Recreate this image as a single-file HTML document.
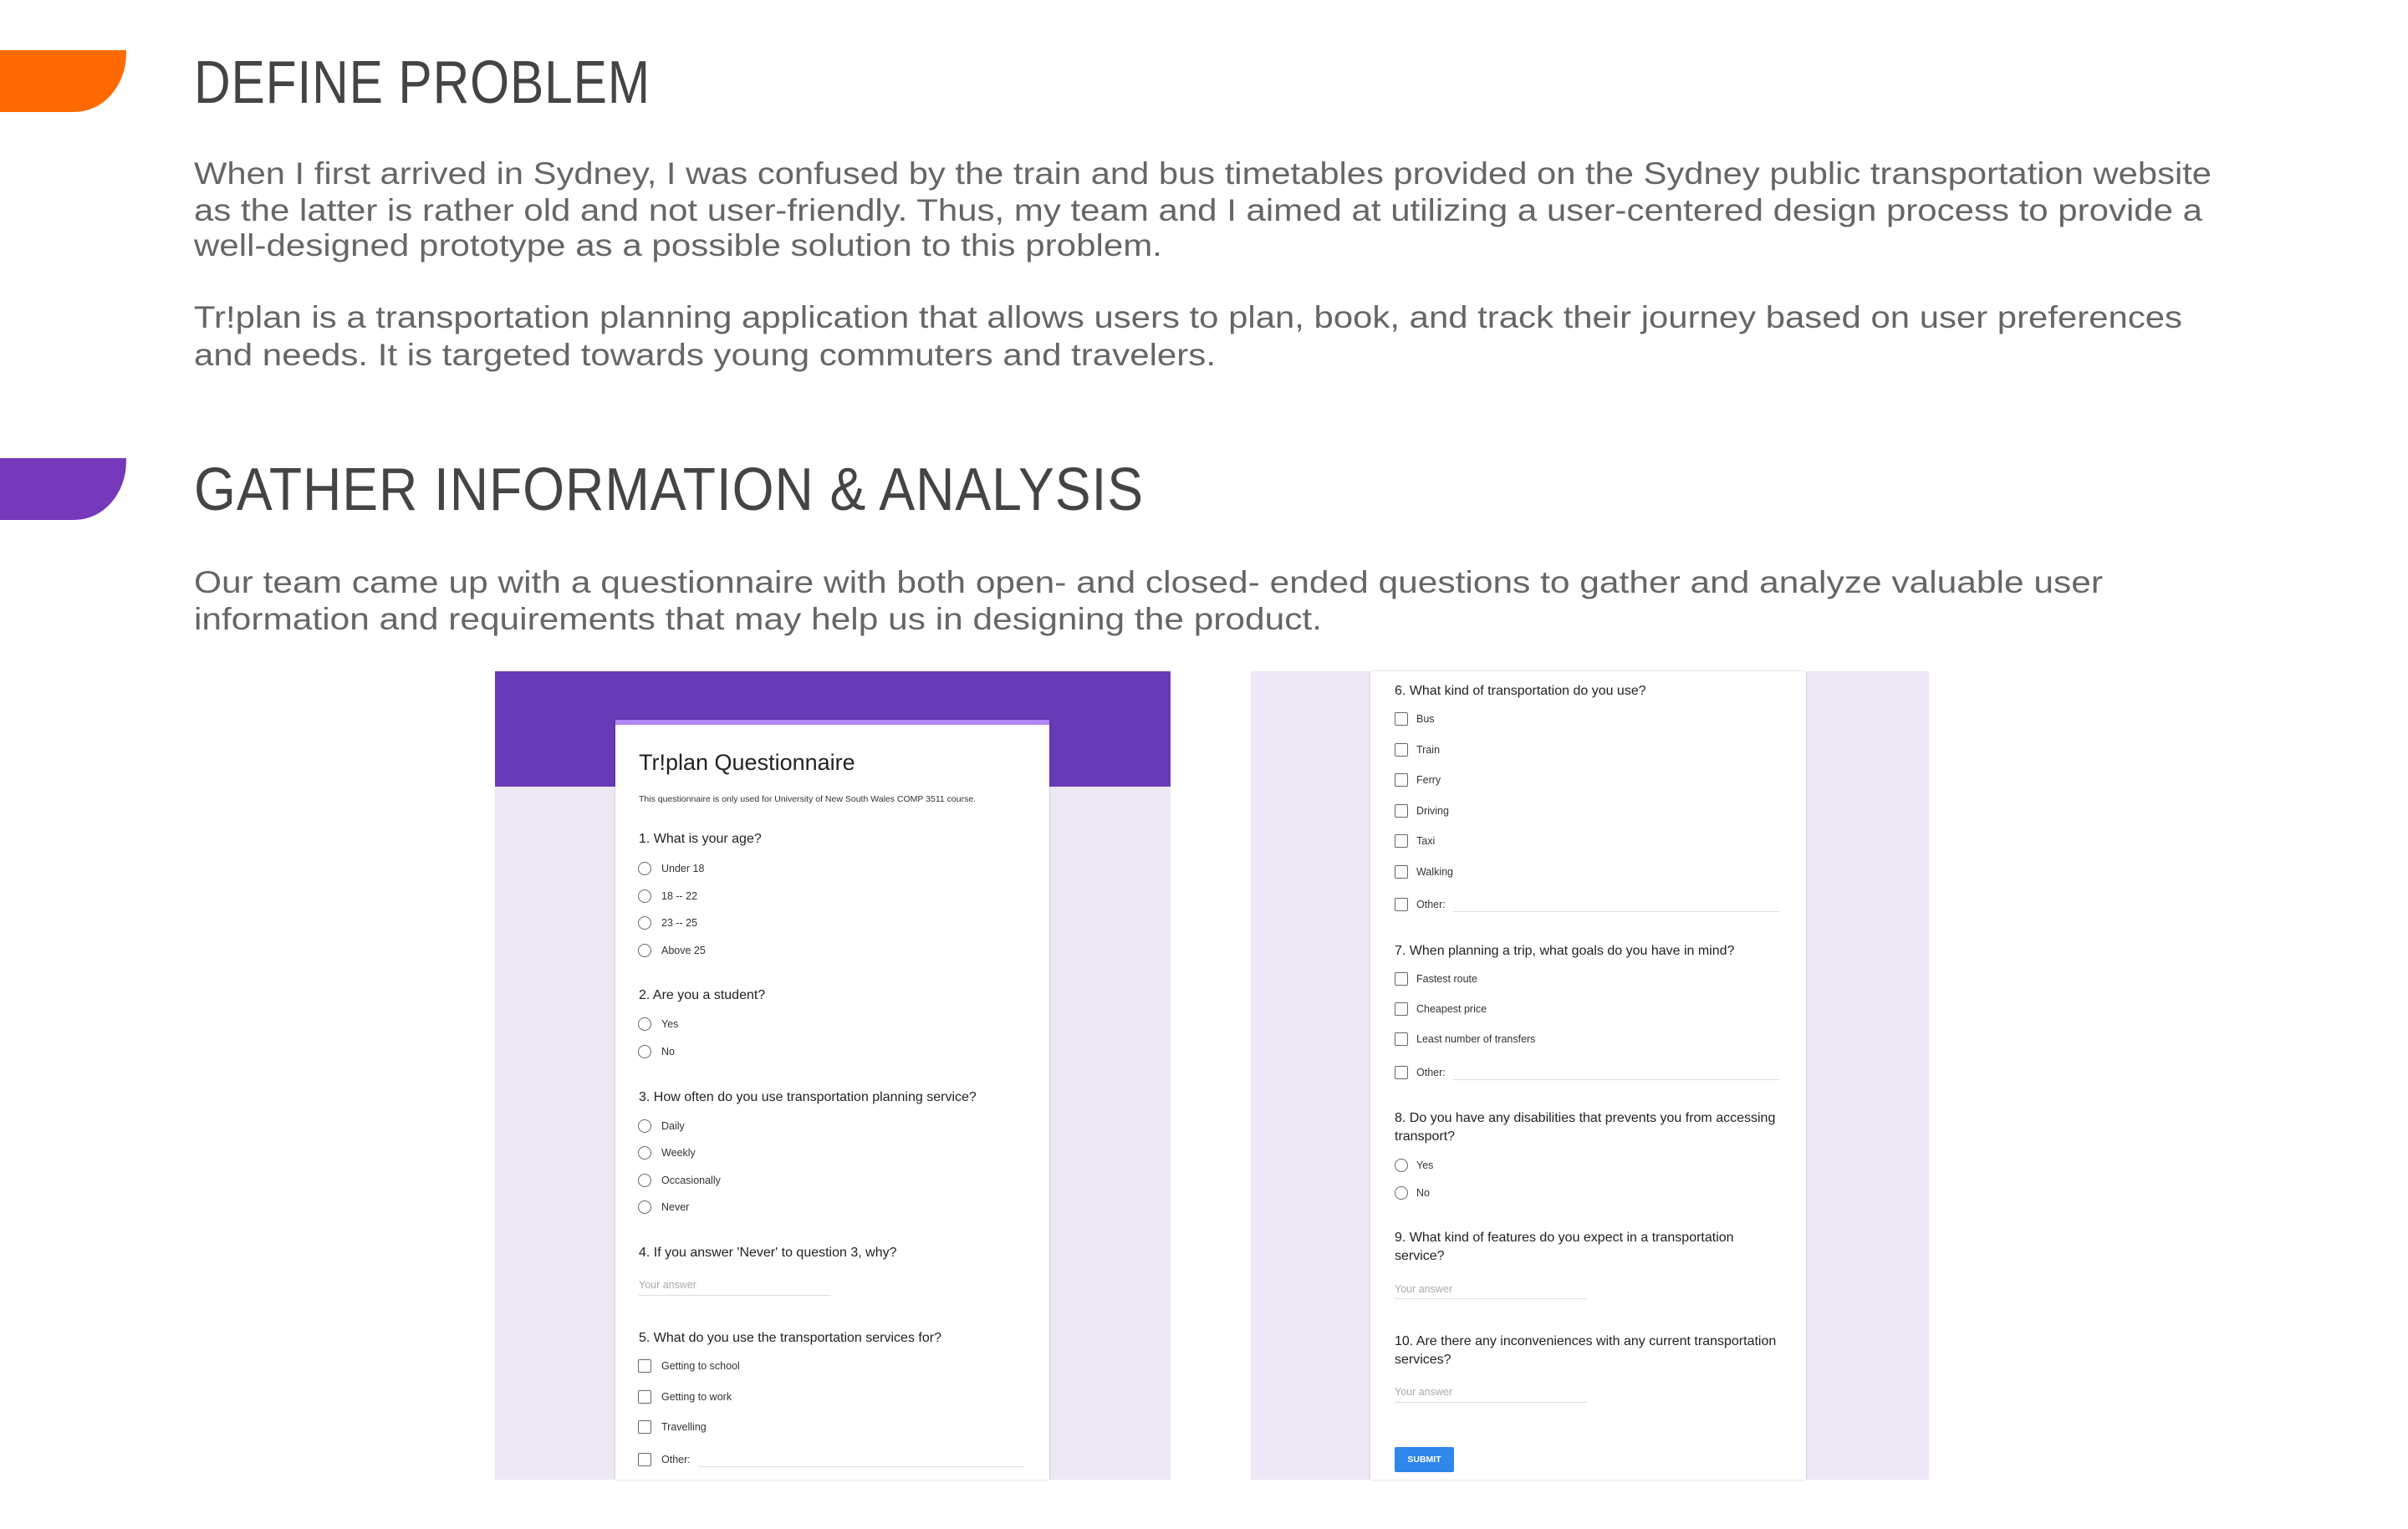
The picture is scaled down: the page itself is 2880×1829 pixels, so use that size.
<!DOCTYPE html>
<html><head><meta charset="utf-8"><style>
*{margin:0;padding:0;box-sizing:border-box}
body{width:2880px;height:1829px;background:#fff;position:relative;overflow:hidden;font-family:"Liberation Sans",Arial,sans-serif}
.a{position:absolute;white-space:nowrap}
.bar{position:absolute;left:0;width:151px;height:74px;border-bottom-right-radius:62px 70px}
.h{font-size:72px;color:#444;line-height:72px;transform-origin:0 0;letter-spacing:1px}
.p{font-size:37px;color:#666;line-height:44px;transform-origin:0 0}
.panel{position:absolute;top:803px;height:967px;background:#ede7f6}
.card{position:absolute;background:#fff;box-shadow:0 0 2px rgba(0,0,0,.25)}
.q{font-size:16px;color:#222;line-height:20px}
.o{font-size:12.5px;color:#333;line-height:16px}
.r{position:absolute;width:16px;height:16px;border:1.5px solid #666;border-radius:50%}
.c{position:absolute;width:16px;height:16px;border:1.5px solid #666;border-radius:2px}
.ln{position:absolute;height:1px;background:#ddd}
.ya{font-size:12.5px;color:#aaa;line-height:16px}
</style></head><body>
<div class="bar" style="top:60px;background:#ff6a00"></div>
<div class="a h" style="left:232px;top:63px" data-x="546">DEFINE PROBLEM</div>
<div class="a p" style="left:232px;top:186px" data-x="2413">When I first arrived in Sydney, I was confused by the train and bus timetables provided on the Sydney public transportation website</div>
<div class="a p" style="left:232px;top:230px" data-x="2402">as the latter is rather old and not user-friendly. Thus, my team and I aimed at utilizing a user-centered design process to provide a</div>
<div class="a p" style="left:232px;top:272px" data-x="1158">well-designed prototype as a possible solution to this problem.</div>
<div class="a p" style="left:232px;top:358px" data-x="2378">Tr!plan is a transportation planning application that allows users to plan, book, and track their journey based on user preferences</div>
<div class="a p" style="left:232px;top:403px" data-x="1222">and needs. It is targeted towards young commuters and travelers.</div>
<div class="bar" style="top:548px;background:#7639bb"></div>
<div class="a h" style="left:232px;top:550px" data-x="1136">GATHER INFORMATION &amp; ANALYSIS</div>
<div class="a p" style="left:232px;top:675px" data-x="2283">Our team came up with a questionnaire with both open- and closed- ended questions to gather and analyze valuable user</div>
<div class="a p" style="left:232px;top:719px" data-x="1349">information and requirements that may help us in designing the product.</div>

<!-- panel 1 -->
<div class="panel" style="left:592px;width:808px"></div>
<div style="position:absolute;left:592px;top:803px;width:808px;height:138px;background:#673ab7"></div>
<div class="card" style="left:736px;top:861px;width:519px;height:909px;border-top:6px solid #b085f5"></div>
<div class="a" style="left:764px;top:896px;font-size:27px;color:#222;line-height:32px">Tr!plan Questionnaire</div>
<div class="a" style="left:764px;top:950px;font-size:10.5px;color:#333;line-height:12px">This questionnaire is only used for University of New South Wales COMP 3511 course.</div>

<div class="a q" style="left:764px;top:994px">1. What is your age?</div>
<div class="r" style="left:763px;top:1031px"></div><div class="a o" style="left:791px;top:1031px">Under 18</div>
<div class="r" style="left:763px;top:1064px"></div><div class="a o" style="left:791px;top:1064px">18 -- 22</div>
<div class="r" style="left:763px;top:1096px"></div><div class="a o" style="left:791px;top:1096px">23 -- 25</div>
<div class="r" style="left:763px;top:1129px"></div><div class="a o" style="left:791px;top:1129px">Above 25</div>
<div class="a q" style="left:764px;top:1181px">2. Are you a student?</div>
<div class="r" style="left:763px;top:1217px"></div><div class="a o" style="left:791px;top:1217px">Yes</div>
<div class="r" style="left:763px;top:1250px"></div><div class="a o" style="left:791px;top:1250px">No</div>
<div class="a q" style="left:764px;top:1303px">3. How often do you use transportation planning service?</div>
<div class="r" style="left:763px;top:1339px"></div><div class="a o" style="left:791px;top:1339px">Daily</div>
<div class="r" style="left:763px;top:1371px"></div><div class="a o" style="left:791px;top:1371px">Weekly</div>
<div class="r" style="left:763px;top:1404px"></div><div class="a o" style="left:791px;top:1404px">Occasionally</div>
<div class="r" style="left:763px;top:1436px"></div><div class="a o" style="left:791px;top:1436px">Never</div>
<div class="a q" style="left:764px;top:1489px">4. If you answer 'Never' to question 3, why?</div>
<div class="a ya" style="left:764px;top:1529px">Your answer</div>
<div class="ln" style="left:764px;top:1549px;width:230px"></div>
<div class="a q" style="left:764px;top:1591px">5. What do you use the transportation services for?</div>
<div class="c" style="left:763px;top:1626px"></div><div class="a o" style="left:791px;top:1626px">Getting to school</div>
<div class="c" style="left:763px;top:1663px"></div><div class="a o" style="left:791px;top:1663px">Getting to work</div>
<div class="c" style="left:763px;top:1699px"></div><div class="a o" style="left:791px;top:1699px">Travelling</div>
<div class="c" style="left:763px;top:1738px"></div><div class="a o" style="left:791px;top:1738px">Other:</div>
<div class="ln" style="left:835px;top:1754px;width:390px"></div>

<!-- panel 2 -->
<div class="panel" style="left:1496px;width:811px"></div>
<div class="card" style="left:1639px;top:803px;width:521px;height:967px"></div>
<div class="a q" style="left:1668px;top:817px">6. What kind of transportation do you use?</div>
<div class="c" style="left:1668px;top:852px"></div><div class="a o" style="left:1694px;top:852px">Bus</div>
<div class="c" style="left:1668px;top:889px"></div><div class="a o" style="left:1694px;top:889px">Train</div>
<div class="c" style="left:1668px;top:925px"></div><div class="a o" style="left:1694px;top:925px">Ferry</div>
<div class="c" style="left:1668px;top:962px"></div><div class="a o" style="left:1694px;top:962px">Driving</div>
<div class="c" style="left:1668px;top:998px"></div><div class="a o" style="left:1694px;top:998px">Taxi</div>
<div class="c" style="left:1668px;top:1035px"></div><div class="a o" style="left:1694px;top:1035px">Walking</div>
<div class="c" style="left:1668px;top:1074px"></div><div class="a o" style="left:1694px;top:1074px">Other:</div>
<div class="ln" style="left:1738px;top:1090px;width:390px"></div>
<div class="a q" style="left:1668px;top:1128px">7. When planning a trip, what goals do you have in mind?</div>
<div class="c" style="left:1668px;top:1163px"></div><div class="a o" style="left:1694px;top:1163px">Fastest route</div>
<div class="c" style="left:1668px;top:1199px"></div><div class="a o" style="left:1694px;top:1199px">Cheapest price</div>
<div class="c" style="left:1668px;top:1235px"></div><div class="a o" style="left:1694px;top:1235px">Least number of transfers</div>
<div class="c" style="left:1668px;top:1275px"></div><div class="a o" style="left:1694px;top:1275px">Other:</div>
<div class="ln" style="left:1738px;top:1291px;width:390px"></div>
<div class="a q" style="left:1668px;top:1328px">8. Do you have any disabilities that prevents you from accessing</div>
<div class="a q" style="left:1668px;top:1350px">transport?</div>
<div class="r" style="left:1668px;top:1386px"></div><div class="a o" style="left:1694px;top:1386px">Yes</div>
<div class="r" style="left:1668px;top:1419px"></div><div class="a o" style="left:1694px;top:1419px">No</div>
<div class="a q" style="left:1668px;top:1471px">9. What kind of features do you expect in a transportation</div>
<div class="a q" style="left:1668px;top:1493px">service?</div>
<div class="a ya" style="left:1668px;top:1534px">Your answer</div>
<div class="ln" style="left:1668px;top:1553px;width:230px"></div>
<div class="a q" style="left:1668px;top:1595px">10. Are there any inconveniences with any current transportation</div>
<div class="a q" style="left:1668px;top:1617px">services?</div>
<div class="a ya" style="left:1668px;top:1657px">Your answer</div>
<div class="ln" style="left:1668px;top:1677px;width:230px"></div>
<div class="a" style="left:1668px;top:1731px;width:71px;height:30px;background:#2f86eb;border-radius:2px;color:#fff;font-size:10.5px;font-weight:bold;line-height:30px;text-align:center">SUBMIT</div>

<script>
document.querySelectorAll('[data-x]').forEach(function(e){
  var w=e.getBoundingClientRect().width;var t=parseFloat(e.getAttribute('data-x'));
  if(w>0)e.style.transform='scaleX('+(t/w)+')';
});
</script>
</body></html>
